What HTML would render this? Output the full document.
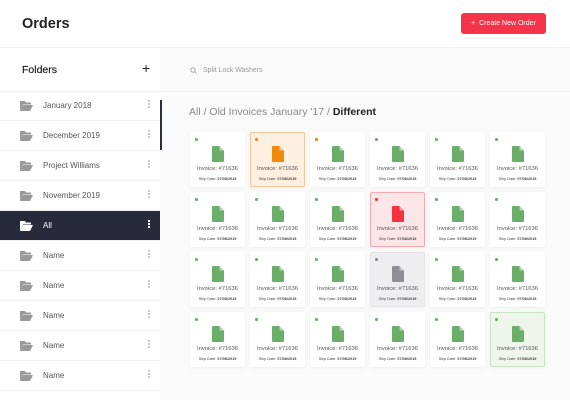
<!DOCTYPE html><html><head><style>
*{margin:0;padding:0;box-sizing:border-box}
body{width:570px;height:400px;overflow:hidden;font-family:"Liberation Sans",sans-serif;background:#fafafa;position:relative}
.hdr{position:absolute;left:0;top:0;width:570px;height:48px;background:#fff;border-bottom:1px solid #f0f0f0}
.sb{position:absolute;left:0;top:48px;width:160px;height:352px;background:#fff}
.t{position:absolute;font-weight:bold;color:#222}
.row{position:absolute;left:0;width:160px;height:30px;border-bottom:1px solid #f0f0f0;font-size:8px;color:#555}
.row span{position:absolute;left:43px;top:10px}
.row svg{position:absolute;left:20px;top:10px}
.row i{position:absolute;left:148px;top:9px;width:1.5px;height:1.5px;background:#ccc;box-shadow:0 3px #ccc,0 6px #ccc}
.row.a{background:#262a3b;color:#fff}
.row.a i{background:#fff;box-shadow:0 3px #fff,0 6px #fff}
.c{position:absolute;width:55px;height:55px;background:#fff;border-radius:2px;box-shadow:0 1px 4px rgba(0,0,0,.05);border:1px solid transparent}
.c b{position:absolute;left:4px;top:5px;width:2.5px;height:2.5px;border-radius:50%;background:#6aae68}
.c svg{position:absolute;left:21px;top:13px}
.c p{position:absolute;left:0;width:53px;text-align:center;color:#555}
.c .p1{top:33px;font-size:5.8px}
.c .p2{top:44px;font-size:3.8px;color:#444}
</style></head><body>
<div class="hdr"></div>
<div class="t" style="left:22px;top:16px;font-size:14.5px">Orders</div>
<div style="position:absolute;left:461px;top:13px;width:85px;height:21px;background:#f5334b;border-radius:3px;color:#fff;font-size:7px;text-align:center;line-height:21px">+&nbsp; Create New Order</div>
<div class="sb"></div>
<div style="position:absolute;left:0;top:91px;width:160px;border-top:1px solid #f0f0f0"></div>
<div class="t" style="left:22px;top:64px;font-size:10.5px;font-weight:normal;color:#222;-webkit-text-stroke:.2px #222">Folders</div>
<div style="position:absolute;left:142px;top:60px;font-size:14px;color:#222">+</div>
<div style="position:absolute;left:160px;top:91px;width:410px;border-top:1px solid #f0f0f0"></div>
<svg style="position:absolute;left:190px;top:67px" width="7" height="7" viewBox="0 0 7 7"><circle cx="3" cy="3" r="2.2" fill="none" stroke="#999" stroke-width=".8"/><path d="M4.6 4.6L6.5 6.5" stroke="#999" stroke-width=".8"/></svg>
<div style="position:absolute;left:203px;top:67px;font-size:7px;color:#999">Split Lock Washers</div>
<div style="position:absolute;left:160px;top:100px;width:2px;height:50px;background:#2a2e3f"></div>
<div style="position:absolute;left:189px;top:106px;font-size:10.5px;color:#8a8a8a">All / Old Invoices January '17 / <b style="color:#222">Different</b></div>
<div id="rows"></div><div id="cards"></div>
<script>
var names=["January 2018","December 2019","Project Williams","November 2019","All","Name","Name","Name","Name","Name"],h="";
names.forEach(function(n,i){var a=i==4;h+='<div class="row'+(a?' a':'')+'" style="top:'+(91+i*30)+'px"><svg width="13" height="10" viewBox="0 0 13 10"><path d="M0 0h5l1 1.5h5v2H3L0 10z" fill="'+(a?'#fff':'#999')+'"/><path d="M3 4h10l-3 6H0z" fill="'+(a?'#fff':'#999')+'"/></svg><span>'+n+'</span><i></i></div>'});
document.getElementById('rows').innerHTML=h;
var sp={"0,1":["#fdf0e0","#f2c99a","#f08a0c","#f08a0c"],"0,2":[0,0,"#6aae68","#f08a0c"],"1,3":["#fde6e8","#f5a9b1","#f5333f","#f5333f"],"2,3":["#eeeef0","#e6e6e9","#8e8e96","#888"],"3,5":["#eef6ec","#c9e3c4","#6aae68","#6aae68"]};
h="";for(var r=0;r<4;r++)for(var c=0;c<6;c++){var s=sp[r+","+c]||[0,0,"#6aae68","#6aae68"];
h+='<div class="c" style="left:'+(190+c*60)+'px;top:'+(132+r*60)+'px;'+(s[0]?'background:'+s[0]+';border-color:'+s[1]:'')+'"><b style="background:'+s[3]+'"></b><svg width="12" height="16" viewBox="0 0 12 16"><path d="M1 0h6.5L12 4.5V15a1 1 0 0 1-1 1H1a1 1 0 0 1-1-1V1a1 1 0 0 1 1-1z" fill="'+s[2]+'"/><path d="M7.5 0v4.5H12" fill="rgba(255,255,255,.5)"/></svg><p class="p1">Invoice: #71636</p><p class="p2">Ship Date: <b style="position:static;width:auto;height:auto;background:none">07/08/2019</b></p></div>'}
document.getElementById('cards').innerHTML=h;
</script>
</body></html>
